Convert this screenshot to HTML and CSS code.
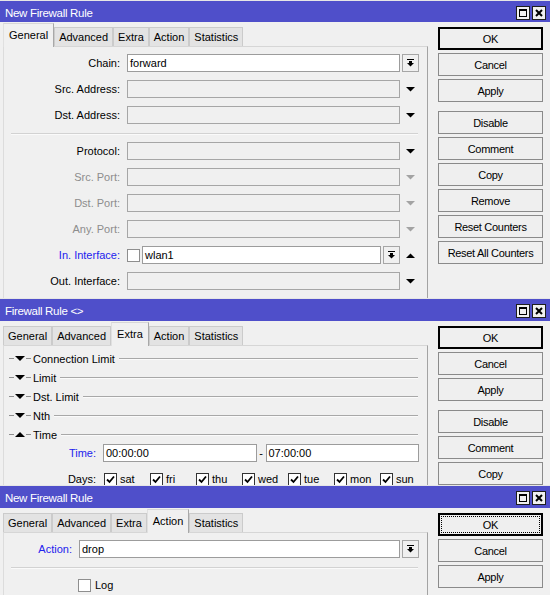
FILE: index.html
```html
<!DOCTYPE html>
<html>
<head>
<meta charset="utf-8">
<title>Firewall Rule</title>
<link rel="stylesheet" href="styles.css">
</head>
<body>

<div class="win w1">
  <div class="titlebar">
    <span class="title">New Firewall Rule</span>
    <span class="tb-btns">
      <span class="tb-btn"><svg width="10" height="10" viewBox="0 0 10 10"><rect x="1.5" y="1.5" width="7" height="7" fill="none" stroke="#000"/><rect x="1" y="1" width="8" height="2" fill="#000"/></svg></span>
      <span class="tb-btn"><svg width="10" height="10" viewBox="0 0 10 10"><path d="M2 2L8 8M8 2L2 8" stroke="#000" stroke-width="2"/></svg></span>
    </span>
  </div>
  <div class="body">
    <div class="main">
      <div class="tabs">
        <span class="tab active">General</span><span class="tab">Advanced</span><span class="tab">Extra</span><span class="tab">Action</span><span class="tab">Statistics</span>
      </div>
      <div class="panel">
        <div class="rows">
          <div class="row"><span class="lbl">Chain:</span><span class="field white">forward</span><span class="ddbtn"><svg width="7" height="8" viewBox="0 0 7 8"><rect width="7" height="1"/><rect x="2" y="2" width="3" height="2"/><polygon points="0,4 7,4 3.5,7.5"/></svg></span></div>
          <div class="row"><span class="lbl">Src. Address:</span><span class="field"></span><span class="arrow"><svg width="9" height="5" viewBox="0 0 9 5"><polygon points="0,0 9,0 4.5,4.5"/></svg></span></div>
          <div class="row"><span class="lbl">Dst. Address:</span><span class="field"></span><span class="arrow"><svg width="9" height="5" viewBox="0 0 9 5"><polygon points="0,0 9,0 4.5,4.5"/></svg></span></div>
          <div class="sep"></div>
          <div class="row"><span class="lbl">Protocol:</span><span class="field"></span><span class="arrow"><svg width="9" height="5" viewBox="0 0 9 5"><polygon points="0,0 9,0 4.5,4.5"/></svg></span></div>
          <div class="row"><span class="lbl dis">Src. Port:</span><span class="field"></span><span class="arrow dis"><svg width="9" height="5" viewBox="0 0 9 5"><polygon points="0,0 9,0 4.5,4.5"/></svg></span></div>
          <div class="row"><span class="lbl dis">Dst. Port:</span><span class="field"></span><span class="arrow dis"><svg width="9" height="5" viewBox="0 0 9 5"><polygon points="0,0 9,0 4.5,4.5"/></svg></span></div>
          <div class="row"><span class="lbl dis">Any. Port:</span><span class="field"></span><span class="arrow dis"><svg width="9" height="5" viewBox="0 0 9 5"><polygon points="0,0 9,0 4.5,4.5"/></svg></span></div>
          <div class="row"><span class="lbl blue">In. Interface:</span><span class="cb"></span><span class="field white">wlan1</span><span class="ddbtn"><svg width="7" height="8" viewBox="0 0 7 8"><rect width="7" height="1"/><rect x="2" y="2" width="3" height="2"/><polygon points="0,4 7,4 3.5,7.5"/></svg></span><span class="arrow"><svg width="9" height="5" viewBox="0 0 9 5"><polygon points="0,5 9,5 4.5,0.5"/></svg></span></div>
          <div class="row"><span class="lbl">Out. Interface:</span><span class="field"></span><span class="arrow"><svg width="9" height="5" viewBox="0 0 9 5"><polygon points="0,0 9,0 4.5,4.5"/></svg></span></div>
        </div>
      </div>
    </div>
    <div class="side">
      <span class="btn def">OK</span>
      <span class="btn">Cancel</span>
      <span class="btn">Apply</span>
      <span class="btn sp">Disable</span>
      <span class="btn">Comment</span>
      <span class="btn">Copy</span>
      <span class="btn">Remove</span>
      <span class="btn">Reset Counters</span>
      <span class="btn">Reset All Counters</span>
    </div>
  </div>
</div>

<div class="win w2">
  <div class="titlebar">
    <span class="title">Firewall Rule &lt;&gt;</span>
    <span class="tb-btns">
      <span class="tb-btn"><svg width="10" height="10" viewBox="0 0 10 10"><rect x="1.5" y="1.5" width="7" height="7" fill="none" stroke="#000"/><rect x="1" y="1" width="8" height="2" fill="#000"/></svg></span>
      <span class="tb-btn"><svg width="10" height="10" viewBox="0 0 10 10"><path d="M2 2L8 8M8 2L2 8" stroke="#000" stroke-width="2"/></svg></span>
    </span>
  </div>
  <div class="body">
    <div class="main">
      <div class="tabs">
        <span class="tab">General</span><span class="tab">Advanced</span><span class="tab active">Extra</span><span class="tab">Action</span><span class="tab">Statistics</span>
      </div>
      <div class="panel">
        <div class="sect"><span class="dash"></span><svg class="tri" width="10" height="5" viewBox="0 0 10 5"><polygon points="0,0 10,0 5,5"/></svg><span class="dash"></span><span class="sect-t">Connection Limit</span><span class="sect-line"></span></div>
        <div class="sect"><span class="dash"></span><svg class="tri" width="10" height="5" viewBox="0 0 10 5"><polygon points="0,0 10,0 5,5"/></svg><span class="dash"></span><span class="sect-t">Limit</span><span class="sect-line"></span></div>
        <div class="sect"><span class="dash"></span><svg class="tri" width="10" height="5" viewBox="0 0 10 5"><polygon points="0,0 10,0 5,5"/></svg><span class="dash"></span><span class="sect-t">Dst. Limit</span><span class="sect-line"></span></div>
        <div class="sect"><span class="dash"></span><svg class="tri" width="10" height="5" viewBox="0 0 10 5"><polygon points="0,0 10,0 5,5"/></svg><span class="dash"></span><span class="sect-t">Nth</span><span class="sect-line"></span></div>
        <div class="sect"><span class="dash"></span><svg class="tri" width="10" height="5" viewBox="0 0 10 5"><polygon points="0,5 10,5 5,0"/></svg><span class="dash"></span><span class="sect-t">Time</span><span class="sect-line"></span></div>
        <div class="rows">
          <div class="row"><span class="lbl blue">Time:</span><span class="field white">00:00:00</span><span class="range">-</span><span class="field white">07:00:00</span></div>
          <div class="row days">
            <span class="lbl">Days:</span>
            <span class="day"><span class="cb on"><svg width="9" height="9" viewBox="0 0 9 9"><path d="M1 4.5L3.5 7L8 1.5" fill="none" stroke="#000" stroke-width="1.8"/></svg></span>sat</span>
            <span class="day"><span class="cb on"><svg width="9" height="9" viewBox="0 0 9 9"><path d="M1 4.5L3.5 7L8 1.5" fill="none" stroke="#000" stroke-width="1.8"/></svg></span>fri</span>
            <span class="day"><span class="cb on"><svg width="9" height="9" viewBox="0 0 9 9"><path d="M1 4.5L3.5 7L8 1.5" fill="none" stroke="#000" stroke-width="1.8"/></svg></span>thu</span>
            <span class="day"><span class="cb on"><svg width="9" height="9" viewBox="0 0 9 9"><path d="M1 4.5L3.5 7L8 1.5" fill="none" stroke="#000" stroke-width="1.8"/></svg></span>wed</span>
            <span class="day"><span class="cb on"><svg width="9" height="9" viewBox="0 0 9 9"><path d="M1 4.5L3.5 7L8 1.5" fill="none" stroke="#000" stroke-width="1.8"/></svg></span>tue</span>
            <span class="day"><span class="cb on"><svg width="9" height="9" viewBox="0 0 9 9"><path d="M1 4.5L3.5 7L8 1.5" fill="none" stroke="#000" stroke-width="1.8"/></svg></span>mon</span>
            <span class="day"><span class="cb on"><svg width="9" height="9" viewBox="0 0 9 9"><path d="M1 4.5L3.5 7L8 1.5" fill="none" stroke="#000" stroke-width="1.8"/></svg></span>sun</span>
          </div>
        </div>
      </div>
    </div>
    <div class="side">
      <span class="btn def">OK</span>
      <span class="btn">Cancel</span>
      <span class="btn">Apply</span>
      <span class="btn sp">Disable</span>
      <span class="btn">Comment</span>
      <span class="btn">Copy</span>
    </div>
  </div>
</div>

<div class="win w3">
  <div class="titlebar">
    <span class="title">New Firewall Rule</span>
    <span class="tb-btns">
      <span class="tb-btn"><svg width="10" height="10" viewBox="0 0 10 10"><rect x="1.5" y="1.5" width="7" height="7" fill="none" stroke="#000"/><rect x="1" y="1" width="8" height="2" fill="#000"/></svg></span>
      <span class="tb-btn"><svg width="10" height="10" viewBox="0 0 10 10"><path d="M2 2L8 8M8 2L2 8" stroke="#000" stroke-width="2"/></svg></span>
    </span>
  </div>
  <div class="body">
    <div class="main">
      <div class="tabs">
        <span class="tab">General</span><span class="tab">Advanced</span><span class="tab">Extra</span><span class="tab active">Action</span><span class="tab">Statistics</span>
      </div>
      <div class="panel">
        <div class="rows">
          <div class="row"><span class="lbl blue">Action:</span><span class="field white">drop</span><span class="ddbtn"><svg width="7" height="8" viewBox="0 0 7 8"><rect width="7" height="1"/><rect x="2" y="2" width="3" height="2"/><polygon points="0,4 7,4 3.5,7.5"/></svg></span></div>
          <div class="sep"></div>
          <div class="row log"><span class="cb"></span><span class="log-t">Log</span></div>
        </div>
      </div>
    </div>
    <div class="side">
      <span class="btn def focus">OK</span>
      <span class="btn">Cancel</span>
      <span class="btn">Apply</span>
    </div>
  </div>
</div>

</body>
</html>
```

FILE: styles.css
```css
* { box-sizing: border-box; }
html, body { margin: 0; padding: 0; }
body {
  width: 550px;
  height: 595px;
  overflow: hidden;
  background: #f0f0f0;
  font-family: "Liberation Sans", Arial, sans-serif;
  font-size: 11px;
  color: #000;
}

.win {
  background: #f0f0f0;
  overflow: hidden;
  display: flex;
  flex-direction: column;
}
.w1 { height: 298px; }
.w2 { height: 187px; }
.w3 { height: 110px; }

.titlebar {
  flex: none;
  height: 23px;
  border-top: 1px solid #e6e6e6;
  background: #4f4fca;
  display: flex;
  align-items: center;
  padding: 2px 4px 0 5px;
  color: #fff;
}
.w1 .titlebar { height: 22px; }
.title { flex: 1; font-size: 11.5px; letter-spacing: -0.3px; }
.tb-btns { display: flex; gap: 2px; }
.tb-btn {
  width: 14px;
  height: 14px;
  border: 1px solid #1e1e1e;
  background: #f0f0f0;
  display: flex;
  align-items: center;
  justify-content: center;
}

.body { flex: 1; display: flex; min-height: 0; }
.main { width: 428px; flex: none; display: flex; flex-direction: column; }
.side {
  flex: 1;
  display: flex;
  flex-direction: column;
  padding: 5px 0 0 10px;
}

.tabs {
  flex: none;
  height: 24px;
  display: flex;
  align-items: flex-end;
  padding-left: 3px;
}
.tab {
  height: 19px;
  padding: 0 4px;
  border: 1px solid #cbcbcb;
  border-bottom: 0;
  background: #e3e3e3;
  display: flex;
  align-items: center;
  white-space: nowrap;
}
.tab.active {
  height: 24px;
  margin-bottom: -1px;
  padding: 0 5px 1px;
  background: #f0f0f0;
  border-color: #d6d6d6 #a8a8a8 #d6d6d6 #e0e0e0;
  position: relative;
  z-index: 1;
}

.panel {
  flex: 1;
  margin-left: 3px;
  border-top: 1px solid #d6d6d6;
  border-left: 1px solid #dcdcdc;
  border-right: 1px solid #a3a3a3;
  padding-top: 7px;
}
.w2 .panel { padding-top: 3px; }

.rows { display: flex; flex-direction: column; gap: 8px; }
.row {
  height: 18px;
  display: flex;
  align-items: center;
  margin-right: 8px;
  white-space: nowrap;
}
.lbl { flex: none; text-align: right; margin-right: 7px; }
.w1 .lbl { width: 116px; }
.w2 .lbl { width: 92px; }
.w3 .lbl { width: 68px; }
.lbl.dis { color: #8d8d8d; }
.lbl.blue { color: #2222ee; }

.field {
  flex: 1;
  height: 18px;
  border: 1px solid #a6a6a6;
  background: #f0f0f0;
  padding: 0 2px;
  line-height: 16px;
  min-width: 0;
}
.field.white { background: #fff; border-color: #9c9c9c; }

.ddbtn {
  flex: none;
  width: 17px;
  height: 18px;
  margin-left: 2px;
  border: 1px solid #a6a6a6;
  background: #f0f0f0;
  display: flex;
  align-items: center;
  justify-content: center;
}
.arrow {
  flex: none;
  width: 17px;
  margin-left: 2px;
  display: flex;
  justify-content: center;
  color: #000;
}
.arrow svg { fill: currentColor; }
.arrow.dis { color: #a3a3a3; }

.cb {
  flex: none;
  width: 13px;
  height: 13px;
  border: 1px solid #8e8e8e;
  background: #fff;
  display: flex;
  align-items: center;
  justify-content: center;
  margin-right: 2px;
}
.cb.on { border-color: #333; }

.sep {
  flex: none;
  height: 2px;
  margin: 1px 9px -1px 7px;
  border-top: 1px solid #d2d2d2;
  border-bottom: 1px solid #fafafa;
}

.sect {
  height: 19px;
  display: flex;
  align-items: center;
  white-space: nowrap;
}
.dash { flex: none; width: 5px; height: 1px; background: #8e8e8e; }
.sect .dash:first-child { margin-left: 5px; }
.tri { flex: none; margin: 0 1px; }
.sect-t { margin-left: 2px; }
.sect-line {
  flex: 1;
  height: 2px;
  margin: 1px 9px 0 4px;
  border-top: 1px solid #a8a8a8;
  border-bottom: 1px solid #fbfbfb;
}

.range { flex: none; width: 9px; text-align: center; }
.days .lbl { margin-right: 8px; }
.day { flex: none; width: 46px; display: flex; align-items: center; }
.day .cb { margin-right: 3px; }

.log { padding-left: 74px; }
.log-t { margin-left: 2px; }

.btn {
  flex: none;
  width: 105px;
  height: 23px;
  margin-bottom: 3px;
  border: 1px solid #8a8a8a;
  background: #efefef;
  display: flex;
  align-items: center;
  justify-content: center;
  letter-spacing: -0.3px;
  white-space: nowrap;
}
.btn.def { border: 2px solid #000; }
.btn.sp { margin-top: 6px; }
.btn.focus { outline: 1px dotted #000; outline-offset: -4px; }
```
